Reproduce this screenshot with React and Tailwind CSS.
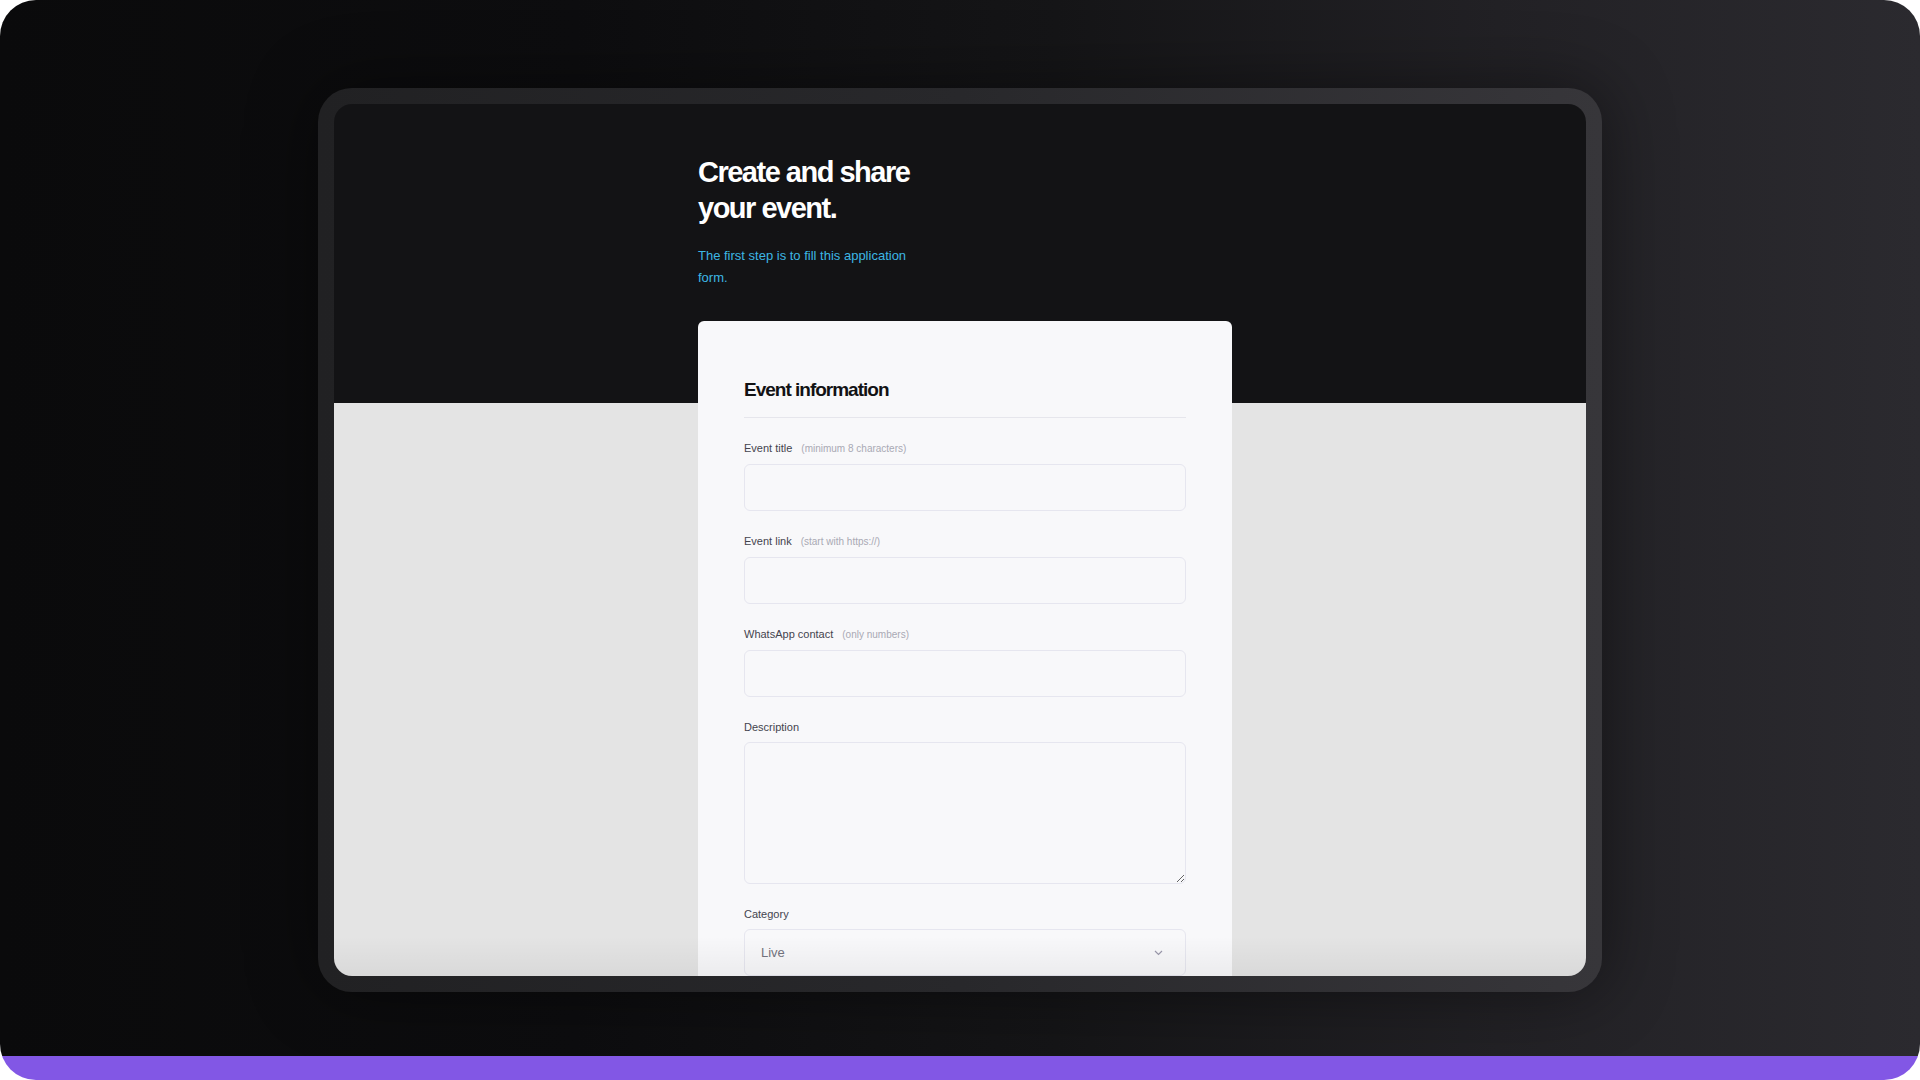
import { useState } from "react";

const fields = [
  { label: "Event title", hint: "(minimum 8 characters)", name: "title" },
  { label: "Event link", hint: "(start with https://)", name: "link" },
  { label: "WhatsApp contact", hint: "(only numbers)", name: "whatsapp" },
];

const Field = ({ label, hint, children }) => (
  <div className="flex flex-col">
    <div className="flex items-baseline gap-[9px] mb-[7px]">
      <span className="text-[11px] leading-[16px] text-[#44444e]">{label}</span>
      {hint && (
        <span className="text-[10px] leading-[16px] text-[#a9a9b4]">{hint}</span>
      )}
    </div>
    {children}
  </div>
);

const App = () => {
  const [event, setEvent] = useState({
    title: "",
    link: "",
    whatsapp: "",
    description: "",
    category: "Live",
  });

  const handleChange = (e) => {
    const { name, value } = e.target;
    setEvent((prev) => ({ ...prev, [name]: value }));
  };

  return (
    <div className="w-full h-[1080px] bg-white font-['Liberation_Sans',Arial,sans-serif]">
      <div className="h-full rounded-[36px] overflow-hidden flex flex-col">
        {/* backdrop */}
        <div className="flex-1 flex justify-center pt-[88px] bg-[linear-gradient(90deg,#0a0a0b_0%,#0d0d0f_30%,#151517_55%,#222125_78%,#2b2a2f_100%)]">
          {/* device frame */}
          <div className="w-[1284px] h-[904px] p-4 rounded-[34px] bg-[linear-gradient(90deg,#212123_0%,#28282b_50%,#37363a_100%)] shadow-[0_0_70px_rgba(0,0,0,0.45)]">
            <div className="relative w-full h-full rounded-[18px] overflow-hidden bg-[linear-gradient(180deg,#131315_0px,#131315_299px,#e4e4e4_299px,#e4e4e4_100%)]">
              <div className="flex justify-center pl-[10px] pt-[50px]">
                <div className="w-[534px] flex flex-col">
                  <h1 className="text-[29px] leading-[36px] font-bold tracking-[-1.5px] text-white whitespace-nowrap">
                    Create and share
                    <br />
                    your event.
                  </h1>
                  <p className="mt-[19px] w-[226px] text-[13px] leading-[22px] text-[#3db7e4]">
                    The first step is to fill this application form.
                  </p>

                  <form className="mt-[32px] bg-[#f8f8fa] rounded-t-[6px] px-[46px] pt-[58px] pb-12">
                    <h2 className="text-[19px] leading-[22px] font-bold tracking-[-1px] text-[#121214] pb-4 border-b border-[#e6e6ec]">
                      Event information
                    </h2>

                    <div className="mt-[22px] flex flex-col gap-[22px]">
                      {fields.map((f) => (
                        <Field key={f.name} label={f.label} hint={f.hint}>
                          <input
                            type="text"
                            name={f.name}
                            value={event[f.name]}
                            onChange={handleChange}
                            className="h-[47px] w-full px-4 rounded-[6px] border border-[#e6e6ef] bg-[#f8f8fa] text-[13px] text-[#41414d] outline-none"
                          />
                        </Field>
                      ))}

                      <Field label="Description">
                        <textarea
                          name="description"
                          value={event.description}
                          onChange={handleChange}
                          className="h-[142px] w-full px-4 py-3 rounded-[6px] border border-[#e6e6ef] bg-[#f8f8fa] text-[13px] text-[#41414d] outline-none"
                        />
                      </Field>

                      <Field label="Category">
                        <div className="relative">
                          <select
                            name="category"
                            value={event.category}
                            onChange={handleChange}
                            className="appearance-none h-[47px] w-full pl-4 pr-10 rounded-[6px] border border-[#e6e6ef] bg-[#f8f8fa] text-[13px] text-[#74747f] outline-none"
                          >
                            <option value="Live">Live</option>
                            <option value="Workshop">Workshop</option>
                            <option value="Meetup">Meetup</option>
                          </select>
                          <svg
                            className="pointer-events-none absolute right-[23px] top-[21px]"
                            width="9"
                            height="6"
                            viewBox="0 0 9 6"
                            fill="none"
                          >
                            <path d="M1 1l3.5 3.5L8 1" stroke="#9b99ab" strokeWidth="1.2" />
                          </svg>
                        </div>
                      </Field>
                    </div>
                  </form>
                </div>
              </div>
              {/* bottom fade of the screen */}
              <div className="pointer-events-none absolute inset-x-0 bottom-0 h-[40px] bg-gradient-to-t from-black/[0.05] to-transparent" />
            </div>
          </div>
        </div>
        <div className="h-[24px] bg-[#8257e5]" />
      </div>
    </div>
  );
};

export default App;
